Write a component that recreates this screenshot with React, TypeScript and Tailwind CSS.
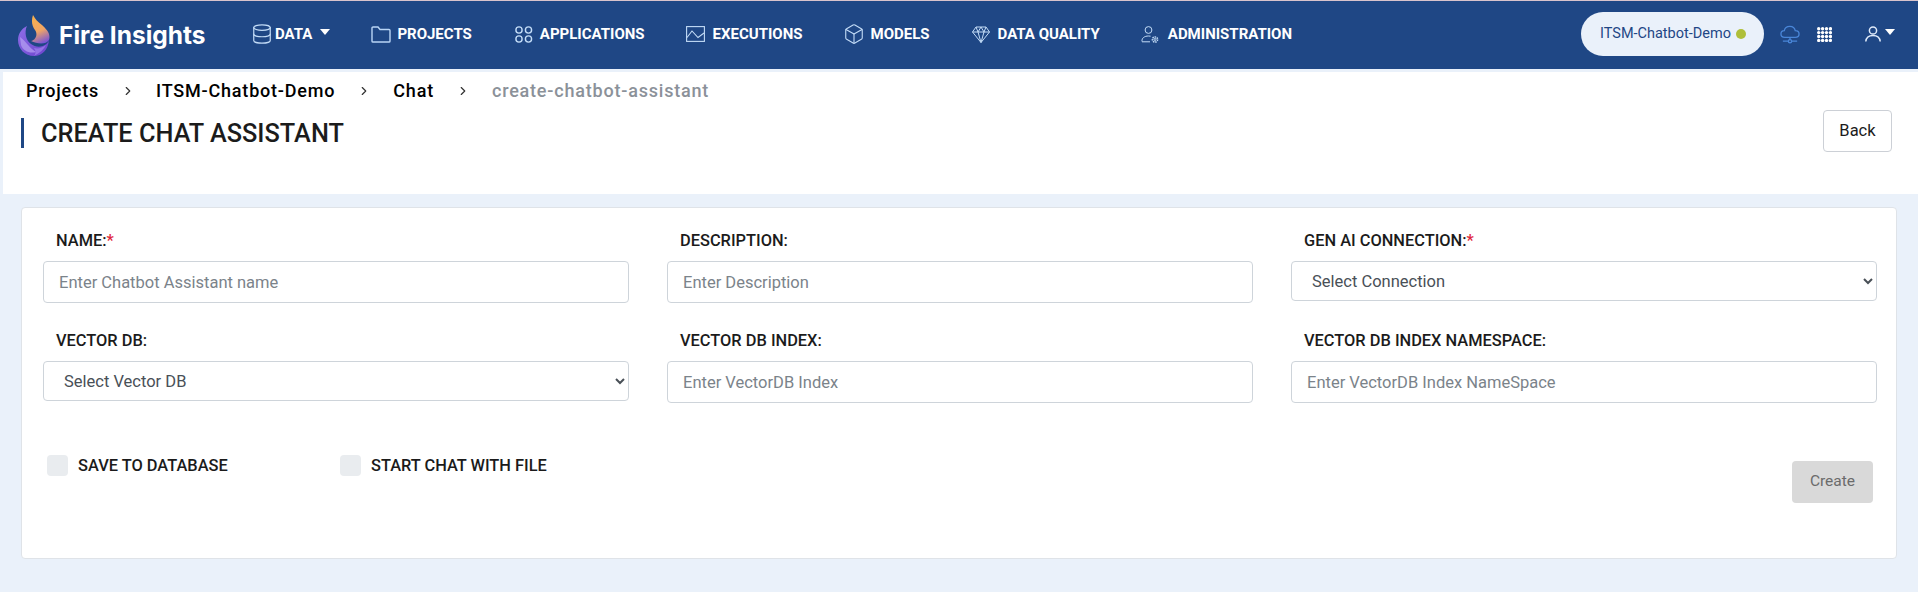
import { Box, ChevronRight, Database } from 'lucide-react';

const roboto = "font-['Roboto',sans-serif]";

function Logo() {
  return (
    <svg width="32" height="41" viewBox="0 0 32 41" className="shrink-0">
      <defs>
        <linearGradient id="flame" x1="0.3" y1="0" x2="0.6" y2="1">
          <stop offset="0" stopColor="#f7b04e" />
          <stop offset="0.55" stopColor="#f0a565" />
          <stop offset="1" stopColor="#7a55d6" />
        </linearGradient>
        <linearGradient id="bowl" x1="0" y1="0" x2="1" y2="1">
          <stop offset="0" stopColor="#8f6fe8" />
          <stop offset="1" stopColor="#6a42cc" />
        </linearGradient>
      </defs>
      <path d="M15 0C13 6 14 11 17 15C20 19 18 25 13 26C19 29 28 30 31 25C33 18 28 14 24 10C20 7 17 4 15 0Z" fill="url(#flame)" />
      <path d="M9 11C3 14 0 19 0 25C0 34 7 41 16 41C24 41 30 35 31 25C28 33 18 33 13 29C8 26 6 17 9 11Z" fill="url(#bowl)" />
      <path d="M2 22C8 26 11 33 18 37C12 39 5 36 3 30Z" fill="#b6a2f2" opacity="0.7" />
      <path d="M16 41C22 38 26 34 28 30C24 33 20 34 16 33C18 36 18 39 16 41Z" fill="#9a7dea" opacity="0.8" />
    </svg>
  );
}

function FolderIcon() {
  return (
    <svg width="20" height="17" viewBox="0 0 20 17" fill="none" stroke="#b9d5f5" strokeWidth="1.4">
      <path d="M1 15.2V2C1 1.3 1.4 1 2 1H7L9 3.5H18C18.6 3.5 19 3.9 19 4.5V15.2C19 15.7 18.6 16 18 16H2C1.4 16 1 15.7 1 15.2Z" />
    </svg>
  );
}

function AppsIcon() {
  return (
    <svg width="18" height="17" viewBox="0 0 18 17" fill="none" stroke="#c3dcf7" strokeWidth="1.4">
      <circle cx="4" cy="4" r="3.1" />
      <circle cx="13.5" cy="4" r="3.1" />
      <circle cx="4" cy="13" r="3.1" />
      <circle cx="13.5" cy="13" r="3.1" />
    </svg>
  );
}

function ExecIcon() {
  return (
    <svg width="19" height="16" viewBox="0 0 19 16" fill="none" stroke="#c3dcf7" strokeWidth="1.1">
      <rect x="0.6" y="0.6" width="17.8" height="14.8" />
      <path d="M1 11.5L6 5L12 11.5L18 7" />
    </svg>
  );
}

function GemIcon() {
  return (
    <svg width="18" height="17" viewBox="0 0 18 17" fill="none" stroke="#c3dcf7" strokeWidth="1">
      <path d="M4 1H14L17.5 6L9 16.5L0.5 6Z" />
      <path d="M0.5 6H17.5M4 1L6 6L9 16.5L12 6L14 1M6 6L9 1L12 6" />
    </svg>
  );
}

function AdminIcon() {
  return (
    <svg width="18" height="17" viewBox="0 0 18 17" fill="none" stroke="#c3dcf7" strokeWidth="1">
      <circle cx="7.5" cy="4" r="3.4" />
      <path d="M1 15.5C0.6 12 3.5 10 7.5 10C8.2 10 9 10.1 9.6 10.2M1 15.8H9" />
      <circle cx="14" cy="13.5" r="1" />
      <circle cx="14" cy="13.5" r="2.6" strokeDasharray="1.5 0.8" strokeWidth="1.5" />
    </svg>
  );
}

function CloudIcon() {
  return (
    <svg width="20" height="19" viewBox="0 0 21 19" fill="none" stroke="#4a86d8" strokeWidth="1.4">
      <path d="M5 12.5C2.5 12.5 1 11 1 9C1 7 2.5 5.5 4.5 5.5C5 2.8 7.5 1 10.3 1C13.2 1 15.5 3 16 5.5C18.3 5.5 20 7 20 9C20 11 18.3 12.5 16 12.5Z" />
      <path d="M10.5 12.5V15M3 16.5H8.5M12.5 16.5H18" />
      <circle cx="10.5" cy="16.5" r="1.7" />
    </svg>
  );
}

function DotsIcon() {
  return (
    <svg width="15" height="15" viewBox="0 0 15 15" fill="#fff">
      {[0, 1, 2, 3].map((r) =>
        [0, 1, 2, 3].map((c) => <circle key={`${r}-${c}`} cx={1.7 + c * 3.9} cy={1.7 + r * 3.9} r="1.7" />),
      )}
    </svg>
  );
}

function UserIcon() {
  return (
    <svg width="16" height="16" viewBox="0 0 16 16" fill="none" stroke="#dfeafa" strokeWidth="1.5">
      <circle cx="8" cy="4.5" r="3.6" />
      <path d="M0.8 15.5C1.2 11.5 4 9.5 8 9.5C12 9.5 14.8 11.5 15.2 15.5" />
    </svg>
  );
}

function Caret() {
  return <span className="block h-0 w-0 border-x-[5px] border-t-[6px] border-x-transparent border-t-white" />;
}

const navItems = [
  { label: 'PROJECTS', icon: <FolderIcon />, cls: 'ml-[41px] gap-[6px]' },
  { label: 'APPLICATIONS', icon: <AppsIcon />, cls: 'ml-[43px] gap-[7px]' },
  { label: 'EXECUTIONS', icon: <ExecIcon />, cls: 'ml-[41px] gap-[8px]' },
  {
    label: 'MODELS',
    icon: <Box size={22} color="#c3dcf7" strokeWidth={1.2} className="-mx-[2px]" />,
    cls: 'ml-[42px] gap-[8px]',
  },
  { label: 'DATA QUALITY', icon: <GemIcon />, cls: 'ml-[42px] gap-[8px]' },
  { label: 'ADMINISTRATION', icon: <AdminIcon />, cls: 'ml-[41px] gap-[9px]' },
];

function Navbar() {
  return (
    <nav className="flex h-[68px] items-center bg-[#1f4785] pl-[18px]">
      <Logo />
      <span className="ml-[9px] w-[147px] whitespace-nowrap font-['Inter',sans-serif] text-[24.5px] font-bold text-white">
        Fire Insights
      </span>
      <div className="mb-[2px] ml-[47px] flex items-center text-[15px] font-bold whitespace-nowrap text-white">
        <span className="flex items-center gap-[4px]">
          <Database size={22} color="#c3dcf7" strokeWidth={1.3} className="-mx-[2px]" />
          <span>DATA</span>
          <span className="-mt-1 ml-[4px]">
            <Caret />
          </span>
        </span>
        {navItems.map((item) => (
          <span key={item.label} className={`flex items-center ${item.cls}`}>
            {item.icon}
            {item.label}
          </span>
        ))}
      </div>
      <div className="mb-[2px] ml-auto flex items-center pr-[23px]">
        <div className="flex h-[44px] w-[183px] items-center rounded-full bg-[#eaf1fa] pl-[19px] text-[14.5px] whitespace-nowrap text-[#1f4785]">
          ITSM-Chatbot-Demo
          <span className="ml-[5px] h-[10px] w-[10px] rounded-full bg-[#afbf3a]" />
        </div>
        <span className="ml-[16px]">
          <CloudIcon />
        </span>
        <span className="ml-[17px]">
          <DotsIcon />
        </span>
        <span className="ml-[33px]">
          <UserIcon />
        </span>
        <span className="-mt-1 ml-[4px]">
          <Caret />
        </span>
      </div>
    </nav>
  );
}

function Label({ text, required }: { text: string; required?: boolean }) {
  return (
    <label className="mb-[12px] block pl-[13px] text-[16.4px] leading-[17px] font-medium text-[#1b1b1b]">
      {text}
      {required && <span className="text-[#e0263c]">*</span>}
    </label>
  );
}

function TextField({ label, placeholder, required }: { label: string; placeholder: string; required?: boolean }) {
  return (
    <div>
      <Label text={label} required={required} />
      <input
        placeholder={placeholder}
        className="h-[42px] w-full rounded border border-[#ced4da] bg-white px-[15px] text-[16.5px] outline-none placeholder:text-[#7b838a]"
      />
    </div>
  );
}

function SelectField({ label, placeholder, required }: { label: string; placeholder: string; required?: boolean }) {
  return (
    <div>
      <Label text={label} required={required} />
      <select className="h-[40px] w-full rounded border border-[#ced4da] bg-white px-[16px] text-[16.5px] text-[#495057] outline-none">
        <option>{placeholder}</option>
      </select>
    </div>
  );
}

function Check({ label, cls }: { label: string; cls: string }) {
  return (
    <label className={`flex items-center gap-[10px] text-[16.4px] leading-[21px] font-medium text-[#1b1b1b] ${cls}`}>
      <span className="h-[21px] w-[21px] rounded bg-[#e9ecef]" />
      <span>{label}</span>
    </label>
  );
}

export default function App() {
  return (
    <div className={`${roboto} h-[592px] overflow-hidden bg-[#eaf1fa] pt-px`}>
      <div className="absolute top-0 left-0 h-px w-full bg-[#d9c3cc]" />
      <Navbar />
      <header className="mt-[3px] ml-[3px] flex h-[122px] justify-between bg-white">
        <div>
          <div className="flex h-[38px] items-center pl-[23px] text-lg font-medium tracking-[0.8px] text-black">
            <span>Projects</span>
            <ChevronRight size={14} className="mr-[21px] ml-[22px] text-[#333]" />
            <span>ITSM-Chatbot-Demo</span>
            <ChevronRight size={14} className="mx-[22px] text-[#333]" />
            <span>Chat</span>
            <ChevronRight size={14} className="mx-[22px] text-[#333]" />
            <span className="text-[#8b9199]">create-chatbot-assistant</span>
          </div>
          <h1 className="mt-[8px] ml-[18px] h-[30px] border-l-[3px] border-[#1f4785] pl-[17px] text-[25.3px] leading-[32px] font-medium text-[#1b1b1b]">
            CREATE CHAT ASSISTANT
          </h1>
        </div>
        <button className="mt-[38px] mr-[26px] h-[42px] w-[69px] rounded-sm border border-[#ccd0d6] bg-white text-[16.5px] text-[#1b1b1b]">
          Back
        </button>
      </header>
      <main className="mx-[21px] mt-[13px] h-[352px] rounded border border-[#dfe3e8] bg-white pt-[24px] pr-[19px] pl-[21px]">
        <div className="grid grid-cols-3 gap-x-[38px] gap-y-[29px]">
          <TextField label="NAME:" placeholder="Enter Chatbot Assistant name" required />
          <TextField label="DESCRIPTION:" placeholder="Enter Description" />
          <SelectField label="GEN AI CONNECTION:" placeholder="Select Connection" required />
          <SelectField label="VECTOR DB:" placeholder="Select Vector DB" />
          <TextField label="VECTOR DB INDEX:" placeholder="Enter VectorDB Index" />
          <TextField label="VECTOR DB INDEX NAMESPACE:" placeholder="Enter VectorDB Index NameSpace" />
        </div>
        <div className="mt-[52px] flex items-start pl-[4px]">
          <Check label="SAVE TO DATABASE" cls="w-[293px]" />
          <Check label="START CHAT WITH FILE" cls="" />
          <button className="mt-[6px] mr-[4px] ml-auto h-[42px] w-[81px] rounded-sm bg-[#d9d9d9] text-[15.5px] text-[#6b6b6b]">
            Create
          </button>
        </div>
      </main>
    </div>
  );
}
